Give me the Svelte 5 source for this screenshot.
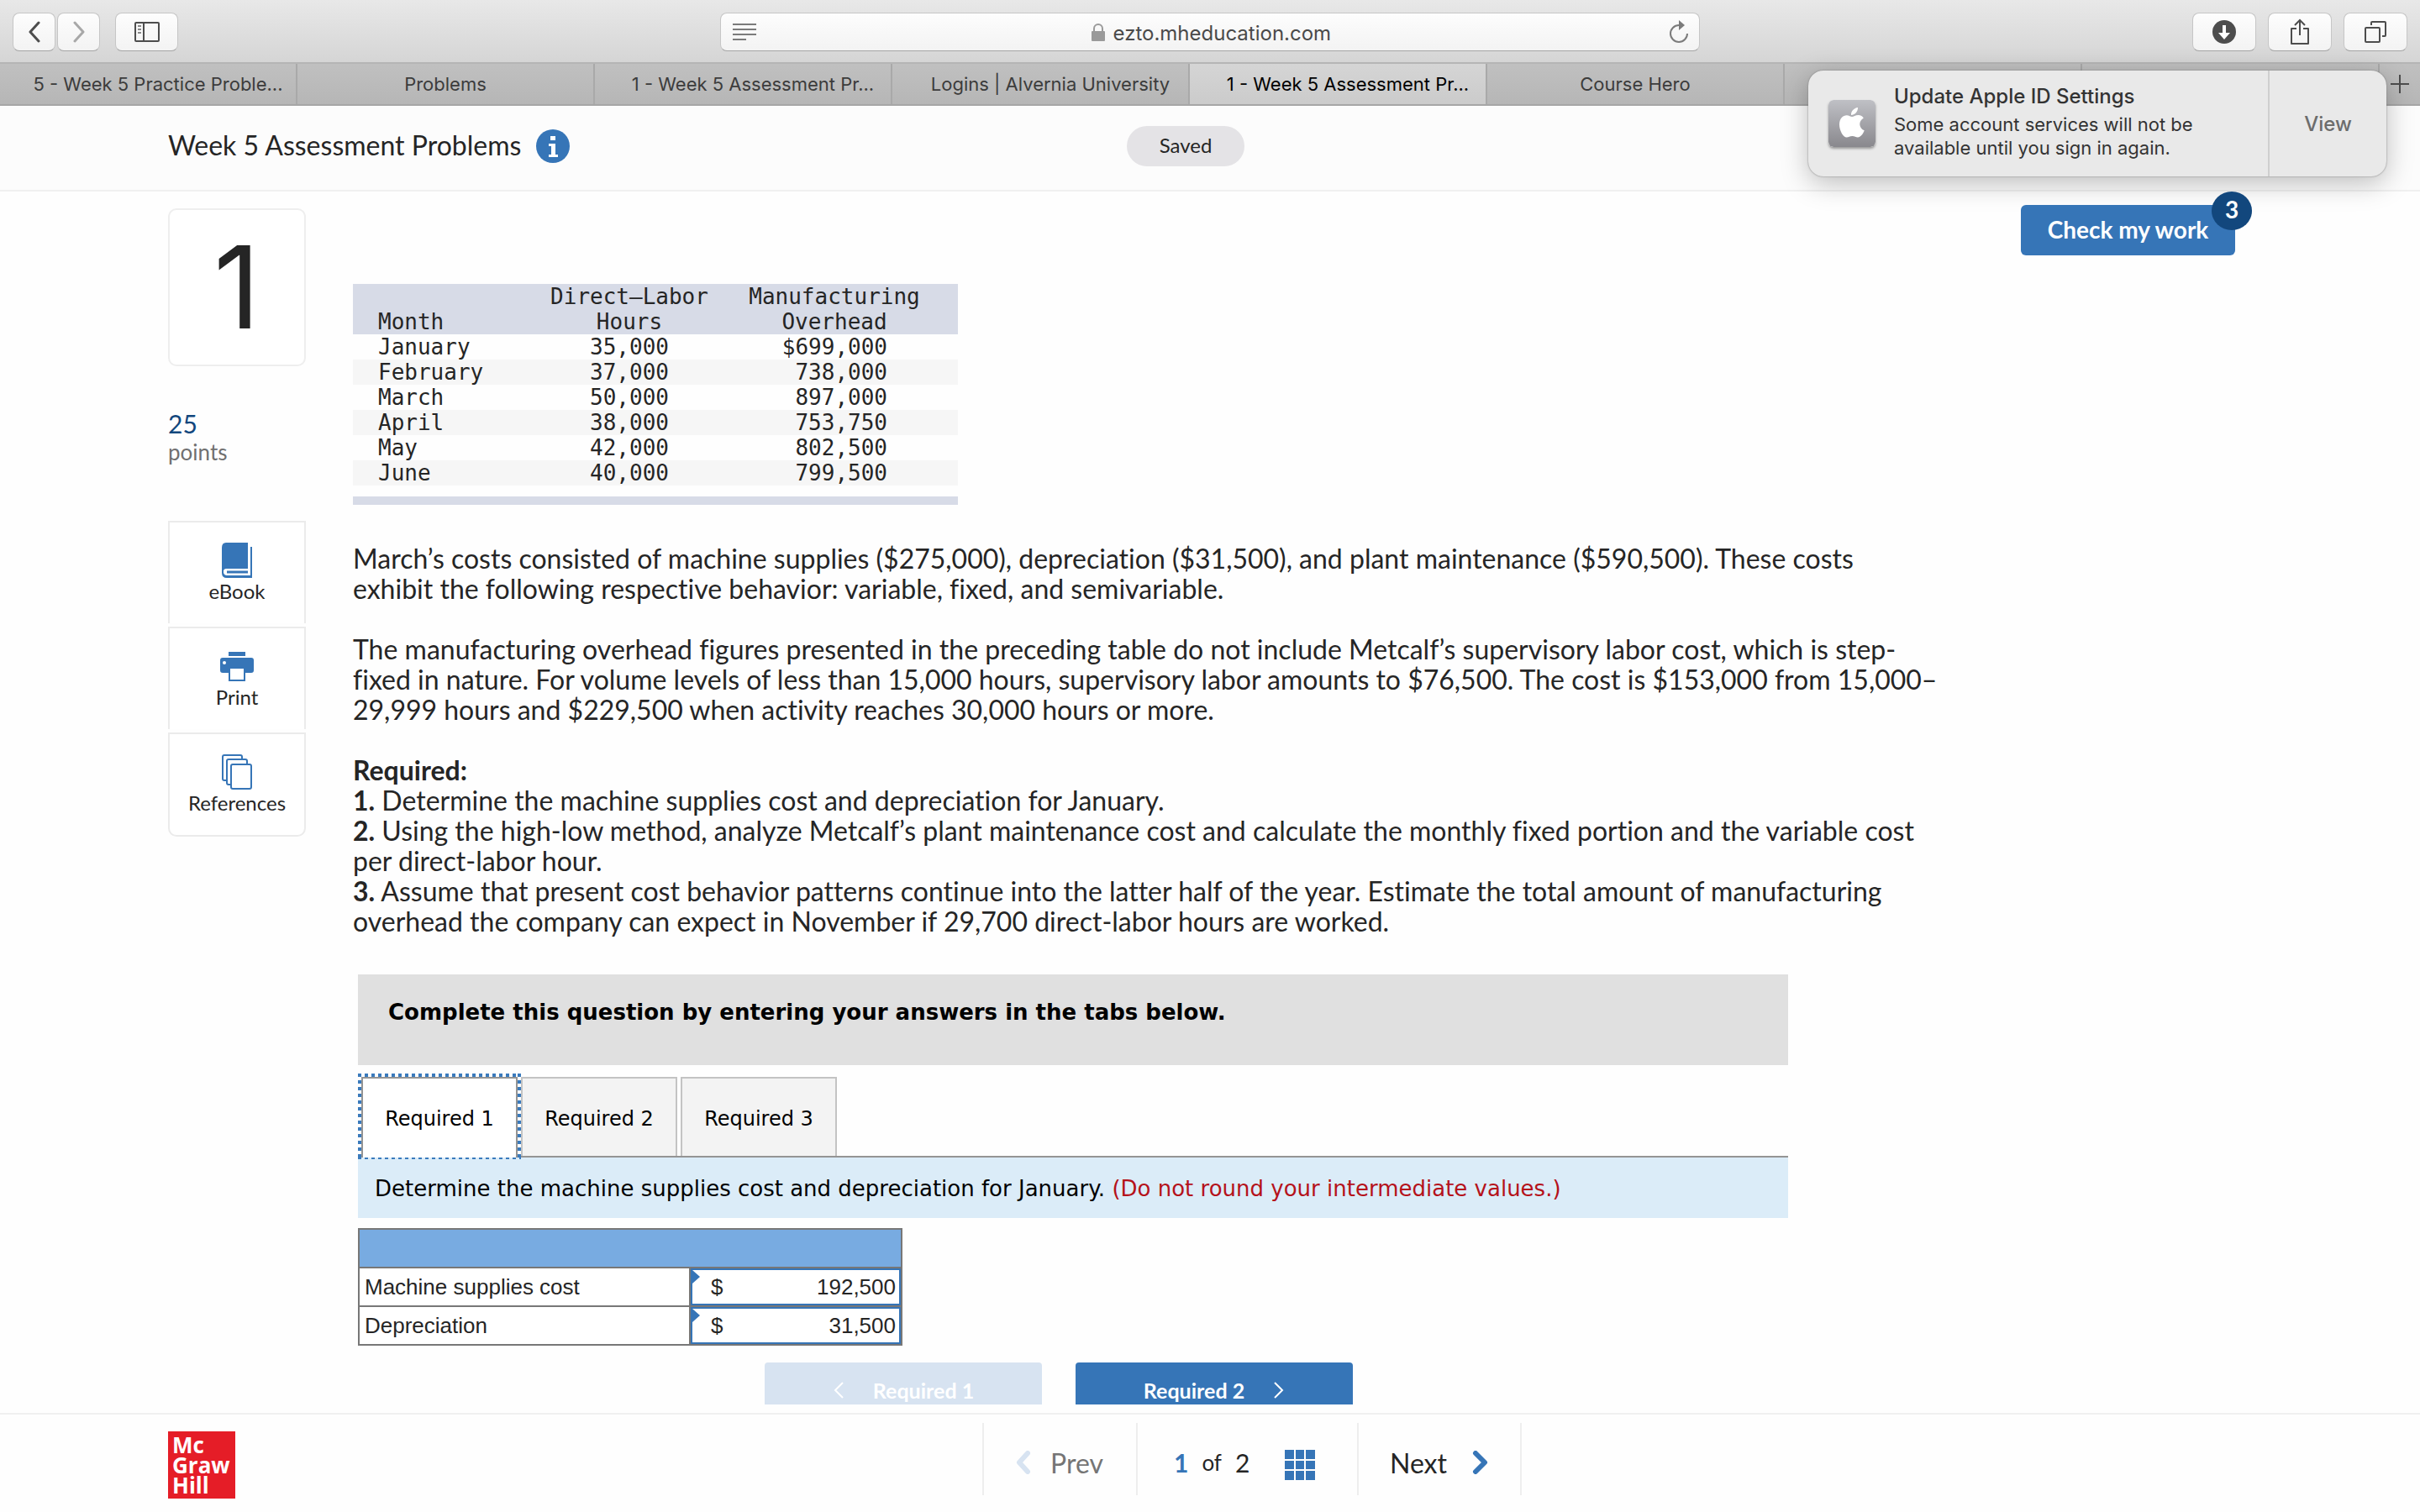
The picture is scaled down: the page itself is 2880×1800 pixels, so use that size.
<script>
  let browserTabs = [
    { title: '5 - Week 5 Practice Proble...', long: true },
    { title: 'Problems' },
    { title: '1 - Week 5 Assessment Pr...', long: true },
    { title: 'Logins | Alvernia University', long: true },
    { title: '1 - Week 5 Assessment Pr...', long: true, current: true },
    { title: 'Course Hero' },
    { title: '' },
    { title: '' }
  ];

  let months = [
    ['January', '35,000', '$699,000'],
    ['February', '37,000', '738,000'],
    ['March', '50,000', '897,000'],
    ['April', '38,000', '753,750'],
    ['May', '42,000', '802,500'],
    ['June', '40,000', '799,500']
  ];

  let answers = [
    { id: 'supplies', label: 'Machine supplies cost', value: '192,500' },
    { id: 'depreciation', label: 'Depreciation', value: '31,500' }
  ];

  let address = 'ezto.mheducation.com';
  let activeTab = 1;
</script>

<div class="window">
  <header class="toolbar">
    <div class="tools-left">
      <button class="tool arrow" aria-label="Back">
        <svg width="16" height="26" viewBox="0 0 16 26"><path d="M13 2 3 13l10 11" fill="none" stroke="#4d4d4d" stroke-width="3" stroke-linecap="round" stroke-linejoin="round" /></svg>
      </button>
      <button class="tool arrow" aria-label="Forward">
        <svg width="16" height="26" viewBox="0 0 16 26"><path d="M3 2l10 11L3 24" fill="none" stroke="#a8a8a8" stroke-width="3" stroke-linecap="round" stroke-linejoin="round" /></svg>
      </button>
      <button class="tool sidebar-button" aria-label="Sidebar">
        <svg width="30" height="24" viewBox="0 0 30 24">
          <rect x="1" y="1" width="28" height="22" rx="1" fill="none" stroke="#4d4d4d" stroke-width="2" />
          <path d="M11 1v22" stroke="#4d4d4d" stroke-width="2" />
          <path d="M4 5h4M4 9h4M4 13h4" stroke="#888" stroke-width="2" />
        </svg>
      </button>
    </div>

    <div class="address">
      <svg width="28" height="20" viewBox="0 0 28 20"><path d="M0 1h28M0 7h28M0 13h28M0 19h16" stroke="#7b7b7b" stroke-width="2" /></svg>
      <div class="address-text">
        <svg width="18" height="22" viewBox="0 0 18 22">
          <rect x="1" y="9" width="16" height="12" rx="1" fill="#9a9a9a" />
          <path d="M4 9V6a5 5 0 0 1 10 0v3" fill="none" stroke="#9a9a9a" stroke-width="2" />
        </svg>
        <input bind:value={address} aria-label="Address" />
      </div>
      <button class="reload" aria-label="Reload">
        <svg width="24" height="28" viewBox="0 0 24 28">
          <path d="M12 6a10 10 0 1 0 10 10" fill="none" stroke="#7b7b7b" stroke-width="2" />
          <path d="M12 0v12l7-6z" fill="#7b7b7b" />
        </svg>
      </button>
    </div>

    <div class="tools-right">
      <button class="tool wide" aria-label="Downloads">
        <svg width="28" height="28" viewBox="0 0 28 28">
          <circle cx="14" cy="14" r="14" fill="#4d4d4d" />
          <path d="M12 6h4v9h5l-7 8-7-8h5z" fill="#fff" />
        </svg>
      </button>
      <button class="tool wide" aria-label="Share">
        <svg width="24" height="32" viewBox="0 0 24 32">
          <path d="M8 12H2v18h20V12h-6" fill="none" stroke="#4d4d4d" stroke-width="2" stroke-linejoin="round" />
          <path d="M12 20V2M6 8l6-6 6 6" fill="none" stroke="#4d4d4d" stroke-width="2" />
        </svg>
      </button>
      <button class="tool wide" aria-label="Show all tabs">
        <svg width="26" height="26" viewBox="0 0 26 26">
          <rect x="1" y="8" width="17" height="17" rx="1" fill="none" stroke="#4d4d4d" stroke-width="2" />
          <path d="M8 5V2q0-1 1-1h15q1 0 1 1v15q0 1-1 1h-3" fill="none" stroke="#4d4d4d" stroke-width="2" />
        </svg>
      </button>
    </div>
  </header>

  <nav class="browser-tabs">
    {#each browserTabs as tab}
      <a href="#tab" class:long={tab.long} class:current={tab.current}>{tab.title}</a>
    {/each}
    <button class="new-tab" aria-label="New tab">
      <svg width="22" height="22" viewBox="0 0 22 22"><path d="M11 0v22M0 11h22" stroke="#4d4d4d" stroke-width="2" /></svg>
    </button>
  </nav>

  <div class="notification">
    <svg class="apple" width="56" height="56" viewBox="0 0 56 56">
      <defs>
        <linearGradient id="metal" x1="0" y1="0" x2="0" y2="1">
          <stop offset="0" stop-color="#bfc0c5" />
          <stop offset="1" stop-color="#89888d" />
        </linearGradient>
      </defs>
      <rect width="56" height="56" rx="6" fill="url(#metal)" />
      <path d="M35 9c.3 5-4 9-8 9-.5-4.500 3.500-8.500 8-9zM28 20c2 0 4-2 7.500-2 3 0 5 1.500 6.300 3.400-6.800 4-5.400 12.300.9 14.900C41 41 38 44.500 35 44.500c-2.600 0-3.500-1.500-6.700-1.500-3.100 0-4.200 1.500-6.600 1.500-4 0-8.700-8-8.700-15.300 0-7.200 4.500-11 8.700-11 2.800 0 4.800 1.800 6.300 1.800z" fill="#fff" />
    </svg>
    <div class="notification-text">
      <strong>Update Apple ID Settings</strong>
      <span>Some account services will not be</span>
      <span>available until you sign in again.</span>
    </div>
    <button class="view">View</button>
  </div>

  <div class="page-header">
    <h1>Week 5 Assessment Problems</h1>
    <button class="info" aria-label="Information">
      <svg width="40" height="40" viewBox="0 0 40 40">
        <circle cx="20" cy="20" r="20" fill="#3675b7" />
        <path d="M17 8h6v5h-6zM15 17h8v13h3v3H15v-3h3V20h-3z" fill="#fff" />
      </svg>
    </button>
    <span class="saved">Saved</span>
  </div>

  <main>
    <aside>
      <div class="number">1</div>
      <div class="points"><b>25</b><span>points</span></div>
      <div class="resources">
        <a href="#ebook">
          <svg width="36" height="42" viewBox="0 0 36 42">
            <path d="M5 0h26v31H5q-2 0-3 2v3q1 3 4 3h28V5h2v37H6q-6 0-6-6V6q0-6 5-6z" fill="#3675b7" />
            <path d="M6 35h25" stroke="#3675b7" stroke-width="3" />
          </svg>
          eBook
        </a>
        <a href="#print">
          <svg width="40" height="42" viewBox="0 0 40 42">
            <path d="M10 4h20v5H10zM3 11h34q3 0 3 3v12q0 3-3 3h-7v10H10V29H3q-3 0-3-3V14q0-3 3-3z" fill="#3675b7" />
            <path d="M12 24h16v13H12z" fill="#fff" />
            <circle cx="5" cy="17" r="2" fill="#fff" />
          </svg>
          Print
        </a>
        <a href="#references">
          <svg width="36" height="42" viewBox="0 0 36 42">
            <g fill="#fff" stroke="#3675b7" stroke-width="2">
              <rect x="1" y="1" width="23" height="30" rx="2" />
              <rect x="6" y="6" width="24" height="30" rx="2" />
              <rect x="11" y="12" width="24" height="29" rx="2" />
            </g>
          </svg>
          References
        </a>
      </div>
    </aside>

    <section class="question">
      <table class="data">
        <thead>
          <tr>
            <th>Month</th>
            <th>Direct–Labor<br />Hours</th>
            <th>Manufacturing<br />Overhead</th>
          </tr>
        </thead>
        <tbody>
          {#each months as [month, hours, overhead]}
            <tr>
              <td>{month}</td>
              <td>{hours}</td>
              <td>{overhead}</td>
            </tr>
          {/each}
        </tbody>
      </table>

      <div class="text">
        <p>
          March’s costs consisted of machine supplies ($275,000), depreciation ($31,500), and plant maintenance ($590,500). These costs<br />
          exhibit the following respective behavior: variable, fixed, and semivariable.
        </p>
        <p>
          The manufacturing overhead figures presented in the preceding table do not include Metcalf’s supervisory labor cost, which is step-<br />
          fixed in nature. For volume levels of less than 15,000 hours, supervisory labor amounts to $76,500. The cost is $153,000 from 15,000–<br />
          29,999 hours and $229,500 when activity reaches 30,000 hours or more.
        </p>
        <p>
          <b>Required:</b><br />
          <b>1.</b> Determine the machine supplies cost and depreciation for January.<br />
          <b>2.</b> Using the high-low method, analyze Metcalf’s plant maintenance cost and calculate the monthly fixed portion and the variable cost<br />
          per direct-labor hour.<br />
          <b>3.</b> Assume that present cost behavior patterns continue into the latter half of the year. Estimate the total amount of manufacturing<br />
          overhead the company can expect in November if 29,700 direct-labor hours are worked.
        </p>
      </div>

      <div class="worksheet">
        <div class="banner">Complete this question by entering your answers in the tabs below.</div>

        <div class="steps" role="tablist">
          {#each [1, 2, 3] as n}
            <div class="step" class:active={activeTab === n}>
              <button role="tab" aria-selected={activeTab === n} on:click={() => (activeTab = n)}>Required {n}</button>
            </div>
          {/each}
        </div>
        <div class="instruction">
          Determine the machine supplies cost and depreciation for January. <span>(Do not round your intermediate values.)</span>
        </div>

        <table class="answers">
          <colgroup>
            <col class="name-col" />
            <col />
          </colgroup>
          <thead>
            <tr><th colspan="2" aria-label="Costs"></th></tr>
          </thead>
          <tbody>
            {#each answers as row}
              <tr>
                <td class="name"><label for={row.id}>{row.label}</label></td>
                <td>
                  <div class="entry">
                    <span>$</span>
                    <input id={row.id} bind:value={row.value} />
                  </div>
                </td>
              </tr>
            {/each}
          </tbody>
        </table>

        <div class="step-buttons">
          <button disabled>
            <svg width="14" height="20" viewBox="0 0 14 20"><path d="M12 1 3 10l9 9" fill="none" stroke="#fff" stroke-width="2" /></svg>
            Required 1
          </button>
          <button>
            Required 2
            <svg width="14" height="20" viewBox="0 0 14 20"><path d="M2 1l9 9-9 9" fill="none" stroke="#fff" stroke-width="2" /></svg>
          </button>
        </div>
      </div>
    </section>

    <div class="check">
      <button>Check my work</button>
      <span class="badge">3</span>
    </div>
  </main>

  <footer>
    <div class="logo"><span>Mc</span><span>Graw</span><span>Hill</span></div>
    <nav class="pager">
      <button class="prev" disabled>
        <svg width="20" height="28" viewBox="0 0 20 28"><path d="M15 3 5 14l10 11" fill="none" stroke="#d7e3f1" stroke-width="6" stroke-linecap="round" stroke-linejoin="round" /></svg>
        Prev
      </button>
      <div class="position">
        <b>1</b><span>of</span><i>2</i>
        <button class="grid" aria-label="All questions">
          <svg width="36" height="36" viewBox="0 0 36 36">
            <path d="M0 0h11v11H0zM13 0h10v11H13zM25 0h11v11H25zM0 13h11v10H0zM13 13h10v10H13zM25 13h11v10H25zM0 25h11v11H0zM13 25h10v11H13zM25 25h11v11H25z" fill="#3675b7" />
          </svg>
        </button>
      </div>
      <button class="next">
        Next
        <svg width="20" height="28" viewBox="0 0 20 28"><path d="M4 3l11 11L4 25" fill="none" stroke="#3675b7" stroke-width="6" stroke-linecap="round" stroke-linejoin="round" /></svg>
      </button>
    </nav>
  </footer>
</div>

<style>
  :global(body) {
    margin: 0;
    background: #fff;
  }

  * {
    box-sizing: border-box;
  }

  button,
  input {
    font: inherit;
    color: inherit;
    border: none;
    background: none;
    padding: 0;
    margin: 0;
    outline: none;
  }

  svg {
    display: block;
    flex: none;
  }

  .window {
    position: relative;
    z-index: 0;
    height: 100vh;
    display: flex;
    flex-direction: column;
    overflow: hidden;
    background: #fefefe;
    color: #252525;
    font-family: Lato, sans-serif;
    font-variant-ligatures: none;
  }

  /* browser chrome */
  .toolbar {
    display: grid;
    grid-template-columns: 1fr 1166px 1fr;
    padding: 15px 15px 13px;
    background: linear-gradient(#e8e8e8, #d5d5d5);
    border-bottom: 2px solid #b5b5b5;
    font-family: Inter, sans-serif;
  }

  .tools-left,
  .tools-right {
    display: flex;
    gap: 2px;
  }

  .tools-right {
    justify-content: flex-end;
    gap: 14px;
  }

  .tool {
    display: flex;
    align-items: center;
    justify-content: center;
    width: 51px;
    height: 46px;
    border: 1px solid #c6c6c6;
    border-bottom-color: #a5a5a5;
    border-radius: 8px;
    background: linear-gradient(#fdfdfd, #f3f3f3);
  }

  .sidebar-button {
    width: 75px;
    margin-left: 16px;
  }

  .wide {
    width: 76px;
  }

  .address {
    display: flex;
    align-items: center;
    justify-content: space-between;
    padding: 0 12px 0 14px;
    border: 1px solid #c6c6c6;
    border-bottom-color: #a5a5a5;
    border-radius: 8px;
    background: linear-gradient(#fdfdfd, #f3f3f3);
    color: #4a4a4a;
    font-size: 24px;
  }

  .address-text {
    display: flex;
    align-items: center;
    gap: 9px;
    padding-top: 2px;
  }

  .address-text input {
    width: 264px;
  }

  .browser-tabs {
    display: grid;
    grid-template-columns: repeat(8, minmax(0, 1fr)) 48px;
    height: 50px;
    background: linear-gradient(#c0c0c0, #b6b6b6);
    border-bottom: 2px solid #a6a6a6;
    font: 22px/48px Inter, sans-serif;
  }

  .browser-tabs a {
    border-right: 2px solid #a9a9a9;
    color: #3c3c3c;
    text-align: center;
    text-decoration: none;
    white-space: nowrap;
  }

  .browser-tabs a.long {
    padding: 0 8px 0 32px;
  }

  .browser-tabs a.current {
    background: linear-gradient(#d5d5d5, #cbcbcb);
    color: #000;
  }

  .new-tab {
    display: flex;
    align-items: center;
    justify-content: center;
  }

  /* floats over the toolbar and the page */
  .notification {
    position: absolute;
    top: 84px;
    right: 40px;
    display: flex;
    align-items: center;
    width: 688px;
    height: 126px;
    padding-left: 24px;
    border-radius: 18px;
    background: #e9e9e9;
    box-shadow: 0 0 2px #777, 0 8px 32px rgba(0, 0, 0, 0.25);
    font-family: Inter, sans-serif;
    color: #333;
  }

  .apple {
    border-radius: 6px;
    box-shadow: 0 2px 3px rgba(0, 0, 0, 0.35);
  }

  .notification-text {
    flex: 1;
    display: flex;
    flex-direction: column;
    margin-left: 22px;
    padding-bottom: 8px;
    font-size: 22px;
    line-height: 28px;
    white-space: nowrap;
  }

  .notification-text strong {
    font-size: 24px;
    font-weight: 500;
    line-height: 38px;
  }

  .view {
    align-self: stretch;
    width: 141px;
    border-left: 2px solid #cfcfcf;
    color: #6c6c6c;
    font-size: 24px;
    font-weight: 500;
  }

  /* page header */
  .page-header {
    position: relative;
    z-index: -1;
    display: flex;
    align-items: center;
    height: 102px;
    padding: 0 200px 4px;
    border-bottom: 2px solid #f0f0f0;
    background: #fcfcfc;
  }

  h1 {
    margin: 0;
    padding-bottom: 2px;
    font-size: 32px;
    line-height: 36px;
    font-weight: 400;
  }

  .info {
    margin-left: 18px;
  }

  .saved {
    position: absolute;
    left: 50%;
    top: 24px;
    width: 140px;
    height: 48px;
    margin-left: -99px;
    border-radius: 24px;
    background: #e4e3e6;
    font-size: 24px;
    line-height: 46px;
    text-align: center;
  }

  /* body of the page */
  main {
    flex: 1;
    min-height: 0;
    display: flex;
    align-items: flex-start;
    margin-bottom: 10px;
    padding: 0 220px 0 200px;
    overflow: hidden;
  }

  aside {
    width: 164px;
    margin: 20px 56px 0 0;
  }

  .number {
    height: 188px;
    border: 2px solid #eee;
    border-radius: 10px;
    background: #fff;
    font: 136px/184px Inter, sans-serif;
    text-align: center;
  }

  .points {
    display: flex;
    flex-direction: column;
    margin: 50px 0 0;
    color: #707070;
    font-size: 26px;
    line-height: 32px;
  }

  .points b {
    color: #12477d;
    font-size: 30px;
    font-weight: 400;
    line-height: 36px;
  }

  .resources {
    display: flex;
    flex-direction: column;
    gap: 4px;
    margin-top: 66px;
  }

  .resources a {
    display: flex;
    flex-direction: column;
    align-items: center;
    justify-content: space-between;
    height: 122px;
    padding: 24px 0;
    border: 2px solid #ebebeb;
    border-bottom: none;
    background: #fff;
    color: #252525;
    font-size: 24px;
    line-height: 28px;
    text-decoration: none;
  }

  .resources a:last-child {
    height: 124px;
    border-bottom: 2px solid #ebebeb;
    border-radius: 0 0 10px 10px;
  }

  .question {
    flex: 1;
    min-width: 0;
    padding-top: 110px;
  }

  .data {
    width: 720px;
    border-collapse: collapse;
    border-bottom: 10px solid #d7dbe7;
    font: 26px/30px "DejaVu Sans Mono", monospace;
  }

  .data th,
  .data td {
    padding: 0;
    font-weight: 400;
    text-align: center;
  }

  .data th {
    background: #d7dbe7;
    vertical-align: bottom;
  }

  .data th:first-child,
  .data td:first-child {
    width: 212px;
    padding-left: 30px;
    text-align: left;
  }

  .data th:nth-child(2) {
    width: 234px;
  }

  .data th:last-child {
    padding-right: 20px;
  }

  .data td:last-child {
    padding-right: 84px;
    text-align: right;
  }

  .data tbody tr:nth-child(even) {
    background: #f6f6f6;
  }

  .data tbody::after {
    content: "";
    display: block;
    height: 13px;
  }

  .text {
    margin-top: 46px;
    font-size: 32px;
    line-height: 36px;
    white-space: nowrap;
  }

  .text p {
    margin: 0 0 36px;
  }

  .worksheet {
    max-width: 1702px;
    margin: 45px 0 0 6px;
    color: #000;
    font-family: "DejaVu Sans", sans-serif;
    font-size: 26px;
  }

  .banner {
    height: 108px;
    padding: 27px 36px;
    background: #e0e0e0;
    font-weight: 700;
    line-height: 36px;
  }

  .steps {
    display: flex;
    align-items: flex-end;
    margin-top: 10px;
    height: 100px;
    border-bottom: 2px solid #949494;
    font-size: 24px;
  }

  .step + .step + .step {
    margin-left: 4px;
  }

  .step button {
    display: block;
    width: 186px;
    height: 94px;
    padding-top: 4px;
    border: 2px solid #c3c3c3;
    border-bottom: none;
    background: #f3f3f3;
  }

  /* square-dotted focus ring round the open tab */
  .step.active {
    margin-bottom: -4px;
    padding: 4px 4px 2px;
    background:
      linear-gradient(90deg, #3a7abc 50%, transparent 0) 0 0 / 8px 4px repeat-x,
      linear-gradient(90deg, #3a7abc 50%, transparent 0) 0 100% / 8px 2px repeat-x,
      linear-gradient(#3a7abc 50%, transparent 0) 0 0 / 4px 8px repeat-y,
      linear-gradient(#3a7abc 50%, transparent 0) 100% 0 / 4px 8px repeat-y;
    position: relative;
  }

  .step.active button {
    height: 96px;
    padding-top: 2px;
    border-color: #949494;
    background: #fff;
  }

  .instruction {
    padding: 19px 20px 17px;
    background: #dbecf8;
    line-height: 36px;
  }

  .instruction span {
    color: #b5121b;
  }

  .answers {
    width: 648px;
    margin-top: 12px;
    border-collapse: collapse;
    table-layout: fixed;
    color: #252525;
    font: 26px/30px "Liberation Sans", sans-serif;
  }

  .name-col {
    width: 394px;
  }

  .answers th,
  .answers td {
    height: 46px;
    padding: 0;
    border: 2px solid #777;
    background: #fff;
  }

  .answers th {
    background: #78abe1;
  }

  .answers td.name {
    padding-left: 6px;
    text-align: left;
  }

  .entry {
    position: relative;
    display: flex;
    align-items: center;
    height: 44px;
    padding: 0 4px 0 22px;
    border: 2px solid #3675b7;
  }

  .entry::before {
    content: "";
    position: absolute;
    left: 0;
    top: 0;
    width: 9px;
    height: 16px;
    background: #3675b7;
    clip-path: polygon(0 0, 100% 50%, 0 100%);
  }

  .entry input {
    flex: 1;
    min-width: 0;
    text-align: right;
  }

  .step-buttons {
    display: flex;
    gap: 40px;
    margin: 20px 0 0 484px;
    font: 700 25px/66px Lato, sans-serif;
  }

  .step-buttons button {
    display: flex;
    align-items: center;
    justify-content: center;
    gap: 34px;
    width: 330px;
    height: 66px;
    border-radius: 4px;
    background: #3675b7;
    color: #fff;
  }

  .step-buttons button:disabled {
    background: #d7e3f1;
  }

  .check {
    position: relative;
    margin-top: 16px;
  }

  .check button {
    width: 255px;
    height: 60px;
    padding-bottom: 2px;
    border-radius: 6px;
    background: #3675b7;
    color: #fff;
    font-size: 28px;
    font-weight: 700;
  }

  .badge {
    position: absolute;
    top: -16px;
    right: -20px;
    width: 48px;
    height: 46px;
    border-radius: 50%;
    background: #12477d;
    color: #fff;
    font-size: 28px;
    font-weight: 700;
    line-height: 42px;
    text-align: center;
  }

  /* footer */
  footer {
    display: grid;
    grid-template-columns: 1fr auto 1fr;
    height: 118px;
    padding: 10px 200px 0;
    border-top: 2px solid #f0f0f0;
    background: #fefefe;
  }

  .logo {
    display: flex;
    flex-direction: column;
    width: 80px;
    height: 80px;
    margin-top: 10px;
    padding: 4px 5px 0;
    background: #e51d27;
    color: #fff;
    font: 700 26px/24px "Open Sans", sans-serif;
  }

  .pager {
    display: flex;
    height: 86px;
    margin-left: 100px;
    border-left: 2px solid #eee;
    font-size: 32px;
  }

  .pager > * {
    display: flex;
    align-items: center;
    padding-top: 8px;
    border-right: 2px solid #eee;
  }

  .prev {
    gap: 22px;
    width: 183px;
    padding-left: 37px;
    color: #757575;
  }

  .position {
    gap: 16px;
    width: 263px;
    padding-left: 43px;
    font-size: 30px;
  }

  .position b {
    color: #3675b7;
  }

  .position span {
    font-size: 26px;
  }

  .position i {
    font-style: normal;
  }

  .grid {
    margin: 6px 0 0 26px;
  }

  .next {
    gap: 30px;
    width: 194px;
    padding-left: 37px;
  }
</style>
